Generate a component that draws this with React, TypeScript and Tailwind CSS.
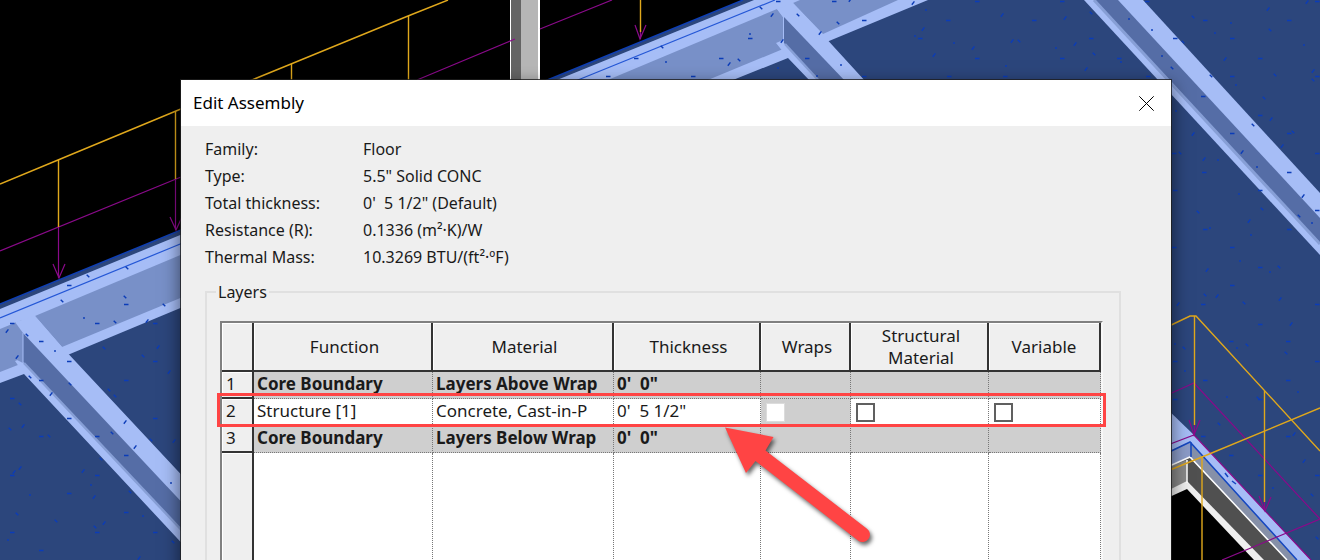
import React from "react";

const DETAILS = [
  { label: "Family:", value: "Floor" },
  { label: "Type:", value: "5.5\" Solid CONC" },
  { label: "Total thickness:", value: "0'  5 1/2\" (Default)" },
  { label: "Resistance (R):", value: "0.1336 (m²·K)/W" },
  { label: "Thermal Mass:", value: "10.3269 BTU/(ft²·ºF)" },
];

const COLUMNS = ["Function", "Material", "Thickness", "Wraps", "Structural Material", "Variable"];

const LAYERS = [
  { id: 1, fn: "Core Boundary", material: "Layers Above Wrap", thickness: "0'  0\"", core: true },
  { id: 2, fn: "Structure [1]", material: "Concrete, Cast-in-P", thickness: "0'  5 1/2\"", core: false },
  { id: 3, fn: "Core Boundary", material: "Layers Below Wrap", thickness: "0'  0\"", core: true },
];

// Concrete surface pattern, [x, y] of each mark
const DASHES = [
  [977, 1], [1062, 1], [1147, 1], [1317, 1], [864, 20], [948, 20], [1034, 20], [1205, 20], [1289, 20], [920, 38],
  [1091, 38], [1175, 38], [1232, 38], [977, 58], [1062, 58], [1119, 58], [1260, 58], [864, 76], [949, 76], [1005, 76],
  [1148, 76], [1232, 76], [1317, 76], [1203, 96], [1260, 115], [1232, 133], [1289, 133], [1174, 153], [1317, 153],
  [1204, 172], [1289, 172], [1175, 190], [1260, 190], [1317, 210], [1205, 229], [1289, 229], [1174, 247], [1232, 247],
  [1260, 267], [69, 285], [126, 304], [97, 323], [155, 323], [12, 323], [41, 341], [69, 361], [155, 361], [126, 380],
  [41, 380], [12, 398], [69, 418], [155, 418], [41, 436], [97, 436], [126, 455], [12, 475], [97, 475], [69, 493],
  [126, 512], [12, 532], [97, 532], [155, 532], [41, 550], [636, 58], [721, 58], [750, 38], [693, 76], [608, 76],
  [778, 1], [807, 58], [834, 1], [1232, 285], [1203, 304], [1317, 304], [1260, 324], [1231, 341], [1288, 341],
  [1175, 361], [1317, 361], [1205, 380], [1288, 380], [1175, 399], [1260, 399], [1203, 436], [1288, 436], [1231, 455],
  [1260, 475], [1317, 475],
];
const RISING = [
  [913, 3], [1002, 15], [1065, 18], [923, 29], [934, 55], [973, 48], [1012, 41], [1075, 44], [1086, 69], [1225, 59],
  [1268, 9], [1307, 2], [1193, 134], [1204, 159], [1249, 221], [1207, 270], [1271, 119], [1282, 146], [1242, 152],
  [1303, 196], [1313, 71], [147, 321], [7, 331], [17, 357], [158, 347], [169, 372], [51, 394], [125, 422],
  [135, 447], [23, 426], [20, 468], [83, 471], [94, 497], [104, 523], [139, 558], [174, 441], [14, 472], [772, 15],
  [729, 64], [850, 0], [782, 41], [820, 33], [1178, 304], [1217, 296], [1280, 299], [1291, 324], [1294, 434],
  [1304, 461],
];
const FALLING = [
  [1019, 41], [1094, 54], [1091, 13], [1193, 17], [1270, 30], [1183, 42], [1172, 68], [1211, 76], [1264, 98],
  [1293, 132], [1180, 153], [1198, 212], [1262, 209], [1279, 267], [1299, 216], [1313, 80], [1275, 75], [1253, 125],
  [125, 297], [164, 305], [62, 301], [115, 322], [27, 335], [104, 348], [143, 356], [30, 377], [70, 384], [109, 390],
  [115, 396], [20, 404], [49, 436], [10, 429], [112, 433], [151, 440], [101, 459], [130, 492], [17, 514], [56, 521],
  [95, 527], [173, 542], [88, 276], [127, 268], [761, 8], [662, 47], [739, 60], [798, 15], [838, 23], [1205, 295],
  [1244, 303], [1184, 348], [1247, 345], [1286, 353], [1258, 398], [1219, 424], [1312, 495], [1317, 538],
];
const DOTS = [
  [926, 10], [954, 43], [1056, 48], [1121, 62], [1129, 19], [1152, 30], [1215, 33], [1231, 23], [1304, 45], [1006, 66],
  [1162, 56], [1236, 85], [1218, 160], [1239, 194], [1210, 228], [1251, 235], [1240, 261], [1270, 272], [1312, 223],
  [915, 36], [1257, 167], [1176, 111], [55, 351], [91, 485], [30, 495], [143, 516], [8, 540], [171, 483], [666, 62],
  [778, 68], [841, 65], [817, 76], [750, 34], [1237, 348], [1175, 344], [1185, 371], [1227, 397], [1298, 392],
  [1273, 488], [84, 318],
];

const marks = (points: number[][], stroke: string) => points.map(([x, y]) => `M${x} ${y}${stroke}`).join("");

function ModelView() {
  return (
    <svg
      className="absolute inset-0 size-full"
      viewBox="0 0 1320 560"
      preserveAspectRatio="xMinYMin slice"
      fill="none"
      aria-hidden="true"
    >
      <rect width="1320" height="560" fill="#000" />
      {/* Slab */}
      <path d="M0 304L743 0H1320V560H0Z" fill="#2c467c" />

      {/* Edge beam, left part */}
      <path d="M0 309L190 231V304L70 354L24 374L0 383Z" fill="#a6bdf6" />
      <path d="M0 329L22 320L23 363L0 372Z" fill="#7890c8" />
      <path d="M35 316L190 251V294L62 347Z" fill="#7890c8" />
      <path d="M0 318L190 240" stroke="#2457d6" strokeWidth="1.2" />

      {/* Edge beam, top part */}
      <path d="M552 82L754 0H928L829 41L788 58L728 82Z" fill="#a6bdf6" />
      <path d="M603 82L777 9L783 17V49L703 82Z" fill="#7890c8" />
      <path d="M793 3L800 0H898L823 34Z" fill="#7890c8" />
      <path d="M573 82L775 0" stroke="#2457d6" strokeWidth="1.2" />
      <path d="M0 304L743 0" stroke="#0f3fb4" strokeWidth="1.5" />

      {/* Left cross beam */}
      <path d="M15 322L35 316L62 347L190 484V552L24 374L15 361L22 358Z" fill="#a6bdf6" />
      <path d="M23 333L190 511V539L23 362Z" fill="#556da6" />
      <path d="M24 363L190 539" stroke="#879fd6" strokeWidth="2.5" />
      <path d="M15 322L23 333V363L15 359Z" fill="#7890c8" />
      <path d="M23 333V363" stroke="#a6bdf6" />

      {/* Middle cross beam */}
      <path d="M777 9L793 3L823 35L866 82H811L788 58L776 43L783 40V17Z" fill="#a6bdf6" />
      <path d="M784 17L846 82H820L784 43Z" fill="#556da6" />
      <path d="M785 44L820 82" stroke="#879fd6" strokeWidth="2.5" />
      <path d="M783.5 17V42" stroke="#a6bdf6" />

      {/* Right cross beam */}
      <path d="M1084 0H1143L1320 193V255Z" fill="#a6bdf6" />
      <path d="M1095 0H1118L1320 218V243Z" fill="#556da6" />
      <path d="M1094 0L1320 244" stroke="#879fd6" strokeWidth="3" />

      <g stroke="#0b3cb8" strokeWidth="1.4">
        <path d={marks(DASHES, "m-2 .5h4.5")} />
        <path d={marks(RISING, "m-1.2 1.8l2.6-3.4")} />
        <path d={marks(FALLING, "m-1.3-1.3l2.6 2.6")} />
        <path d={marks(DOTS, "m0-1v2")} />
      </g>

      {/* Column */}
      <path d="M510 0H540V82H510Z" fill="#fff" />
      <path d="M511 0H521V82H511Z" fill="#646464" />
      <path d="M521 0H538V82H521Z" fill="#b6b6b6" />

      {/* Lower right corner */}
      <path d="M1165 407L1195 436L1311 560H1165Z" fill="#a6bdf6" />
      <path d="M1165 453L1190 442L1297 560H1165Z" fill="#8690a8" />
      <path d="M1165 453L1190 442V457L1165 468Z" fill="#8c9cc8" />
      <path d="M1165 468L1190 457L1287 560H1165Z" fill="#505050" />
      <path d="M1165 468L1187 460V484L1165 493Z" fill="#888" />
      <path d="M1165 492L1187 481L1264 560H1165Z" fill="#eee" />
      <path d="M1165 499L1187 489L1254 560H1165Z" fill="#000" />
      <path d="M1165 468L1190 457L1287 560M1187 460V483" stroke="#fff" strokeWidth="1.5" />
      <path d="M1165 454L1190 442L1297 560M1191 442V457" stroke="#1547c0" strokeWidth="1.5" />
      <path d="M1225 473L1228 477M1232 481L1236 484" stroke="#1547c0" strokeWidth="1.5" />

      {/* Railings */}
      <g stroke="#8a0a8a" strokeWidth="1.2">
        <path d="M0 251L181 177M417 80L515 39M540 29L612 0" />
        <path d="M58.5 227V278M53 264L59 278L65 264M175.5 179V230M170 217L176 230L182 217" />
        <path d="M640.5 30V39M635 25L640 39L646 25" />
        <path d="M1165 396L1194 383L1320 519M1165 446L1194 435L1311 560M1222 560L1320 519" />
        <path d="M1194.500 425V435M1189 420L1194 435L1200 420M1264.500 500V511M1259 496L1265 511L1271 497" />
      </g>
      <g stroke="#e0a81c" strokeWidth="1.4">
        <path d="M0 184L58 160L176 111L291 64L408 16L448 0" />
        <path d="M58.5 160V227M175.5 111V179M291.5 64V82M408.5 16V82M640.5 0V32" />
        <path d="M1165 328L1190 316H1196L1320 451M1165 472L1202 457L1320 408" />
        <path d="M1194.5 316V425M1264.5 391V502M1202 457V560" />
      </g>
    </svg>
  );
}

function PointerArrow() {
  return (
    <svg
      className="pointer-events-none absolute top-[99px] left-[498px] drop-shadow-[2px_3px_2px_rgba(0,0,0,0.6)]"
      width="160"
      height="130"
      viewBox="720 422 160 130"
      aria-hidden="true"
    >
      <path
        d="M725 427.500L773.500 437L765.500 450.500L867 528.700A7.400 7.400 0 0 1 858 540.500L755.500 461L746 473Z"
        fill="#ff4444"
      />
    </svg>
  );
}

function LayersTable() {
  return (
    <table className="w-full table-fixed border-separate border-spacing-0 bg-white text-left text-[17px] leading-[22px]">
      <colgroup>
        <col className="w-[32px]" />
        <col className="w-[179px]" />
        <col className="w-[181px]" />
        <col className="w-[147px]" />
        <col className="w-[90px]" />
        <col className="w-[138px]" />
        <col className="w-[112px]" />
      </colgroup>
      <thead>
        <tr className="h-[49px] bg-[#efefef]">
          <td className="border-r-2 border-b-2 border-[#333] shadow-[inset_1px_1px_0_#fff]" />
          {COLUMNS.map((name) => (
            <th
              key={name}
              scope="col"
              className="border-r-2 border-b-2 border-[#333] pt-[1px] pr-5 pl-6 text-center font-normal shadow-[inset_1px_1px_0_#fff] last:pl-5 [&:nth-child(5)]:pr-2 [&:nth-child(5)]:pl-3"
            >
              {name}
            </th>
          ))}
        </tr>
      </thead>
      <tbody>
        {LAYERS.map((layer) => {
          const cell = `h-[27px] border-r border-b border-dotted border-[#777] pb-[2px] pl-[3px] whitespace-pre ${
            layer.core ? "bg-[#cfcfcf] font-bold" : ""
          }`;
          const boxCell = `h-[27px] border-r border-b border-dotted border-[#777] pl-[5px] ${
            layer.core ? "bg-[#cfcfcf]" : ""
          }`;

          return (
            <tr key={layer.id}>
              <th
                scope="row"
                className="border-r-2 border-b-2 border-[#333] bg-[#efefef] pb-[2px] pl-[4px] font-normal shadow-[inset_1px_1px_0_#fff]"
              >
                {layer.id}
              </th>
              <td className={cell}>{layer.fn}</td>
              <td className={cell}>{layer.material}</td>
              <td className={cell}>{layer.thickness}</td>
              <td className={`${boxCell} bg-[#cfcfcf]`}>
                {!layer.core && (
                  <input
                    type="checkbox"
                    disabled
                    aria-label="Wraps"
                    className="block size-[19px] appearance-none border border-[#dcdcdc] bg-white"
                  />
                )}
              </td>
              <td className={boxCell}>
                {!layer.core && (
                  <input
                    type="checkbox"
                    aria-label="Structural Material"
                    className="block size-[19px] appearance-none border-2 border-[#606060] bg-white"
                  />
                )}
              </td>
              <td className={boxCell}>
                {!layer.core && (
                  <input
                    type="checkbox"
                    aria-label="Variable"
                    className="block size-[19px] appearance-none border-2 border-[#606060] bg-white"
                  />
                )}
              </td>
            </tr>
          );
        })}
        <tr className="h-[160px]">
          <td className="border-r-2 border-[#333] bg-[#efefef] shadow-[inset_1px_1px_0_#fff]" />
          {COLUMNS.map((name) => (
            <td key={name} className="border-r border-dotted border-[#777]" />
          ))}
        </tr>
      </tbody>
    </table>
  );
}

export default function App() {
  return (
    <div className="relative h-screen overflow-hidden bg-black font-['Noto_Sans','Open_Sans',sans-serif] text-[#1a1a1a]">
      <ModelView />

      <main
        role="dialog"
        aria-labelledby="dialog-title"
        className="relative mt-[80px] mr-[149px] ml-[181px] bg-[#efefef] shadow-[0_0_0_1px_rgba(30,30,30,0.8),0_6px_16px_2px_rgba(0,0,0,0.5)]"
      >
        <header className="flex h-[46px] items-center justify-between bg-white pr-4 pl-3">
          <h1 id="dialog-title" className="text-[17px] text-black">Edit Assembly</h1>
          <button type="button" aria-label="Close" className="flex size-4 items-center">
            <svg width="15" height="15" viewBox="0 0 15 15" fill="none" stroke="#000">
              <path d="M.3 .3L14.7 14.7M14.7 .3L.3 14.7" />
            </svg>
          </button>
        </header>

        <div className="pt-[10px] pr-[50px] pl-6">
          <dl className="grid grid-cols-[158px_1fr] text-[16px] leading-[27px]">
            {DETAILS.map((item) => (
              <React.Fragment key={item.label}>
                <dt>{item.label}</dt>
                <dd className="whitespace-pre">{item.value}</dd>
              </React.Fragment>
            ))}
          </dl>

          <fieldset className="mt-[10px] border-2 border-[#e0e0e0] pr-4 pl-[13px]">
            <legend className="-ml-1 px-[2px] text-[16px] leading-[22px]">Layers</legend>
            <div className="relative mt-[18px] border-2 border-t-[#808080] border-r-[#f8f8f8] border-b-white border-l-[#808080]">
              <LayersTable />
              <div className="pointer-events-none absolute -right-[5px] -left-[5px] top-[70px] h-[34px] border-3 border-[#ff4444]" />
              <PointerArrow />
            </div>
          </fieldset>
        </div>
      </main>
    </div>
  );
}
